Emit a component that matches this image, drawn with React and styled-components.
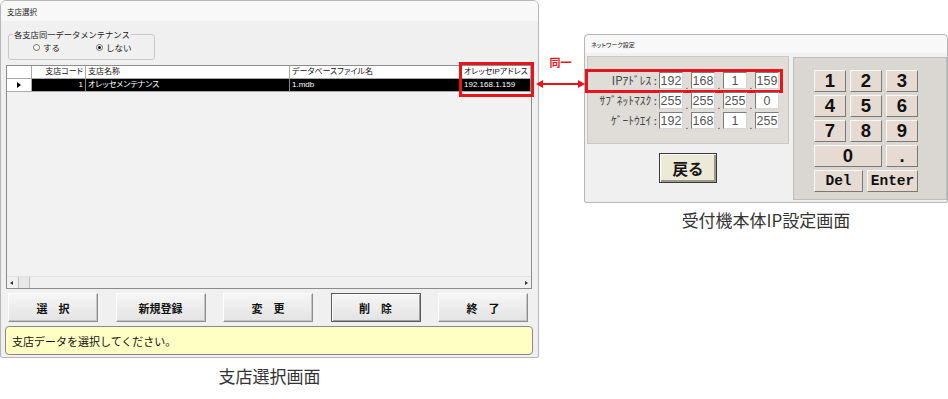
import React from "react";
import styled, { createGlobalStyle } from "styled-components";

const JP = `"Noto Sans CJK JP", "Noto Sans", sans-serif`;
const UI = `"Liberation Sans", "Noto Sans CJK JP", sans-serif`;
const RED = "#e8141c";

const GlobalStyle = createGlobalStyle`
  html, body { margin: 0; padding: 0; background: #fff; }
  body { font-family: ${JP}; color: #111; }
  * { box-sizing: border-box; }
`;

const Page = styled.div`
  position: relative;
  width: 948px;
  height: 399px;
  display: flex;
  align-items: flex-start;
  overflow: hidden;
  background: #fff;
`;

const Column = styled.div`
  display: flex;
  flex-direction: column;
  align-items: center;
  flex: none;
  width: ${(p) => p.$w}px;
  margin-left: ${(p) => p.$ml || 0}px;
  margin-top: ${(p) => p.$mt || 0}px;
`;

const Caption = styled.div`
  margin-top: ${(p) => p.$mt}px;
  font-family: ${JP};
  font-size: 17px;
  line-height: 20px;
  color: #333;
`;

const Window = styled.div`
  width: 100%;
  height: ${(p) => p.$h}px;
  border: 1px solid #b6b6b6;
  border-radius: ${(p) => p.$r}px ${(p) => p.$r}px 2px 2px;
  background: #f0f0f0;
  display: flex;
  flex-direction: column;
`;

const TitleBar = styled.div`
  height: ${(p) => p.$h}px;
  flex: none;
  display: flex;
  align-items: center;
  padding-left: ${(p) => p.$pl}px;
  font-family: ${JP};
  font-feature-settings: "palt";
  font-size: ${(p) => p.$fs}px;
  color: #222;
  background: #f8f8f8;
  border-radius: 5px 5px 0 0;
`;

const Body = styled.div`
  flex: 1;
  display: flex;
  flex-direction: column;
  padding: 0 6px 2px 5px;
`;

/* ---------- group box ---------- */
const GroupBox = styled.fieldset`
  margin: 8px 0 0 2px;
  padding: 0 0 7px 0;
  width: 147px;
  border: 1px solid #c9c9c9;
  border-radius: 3px;
  min-width: 0;
`;

const Legend = styled.legend`
  padding: 0 1px;
  margin-left: 4px;
  font-size: 8.3px;
  line-height: 10px;
  white-space: nowrap;
  color: #222;
`;

const RadioRow = styled.div`
  margin-top: 3px;
  padding-left: 24px;
  height: 10px;
  display: flex;
  align-items: center;
`;

const RadioItem = styled.label`
  width: ${(p) => p.$w}px;
  display: flex;
  align-items: center;
  gap: 3px;
  font-size: 8.5px;
  line-height: 10px;
  white-space: nowrap;
  color: #222;
`;

const RadioDot = styled.span`
  width: 7px;
  height: 7px;
  flex: none;
  border-radius: 50%;
  border: 1px solid #6f6f6f;
  background: #fff;
  display: flex;
  align-items: center;
  justify-content: center;
  &::after {
    content: "";
    width: 3px;
    height: 3px;
    border-radius: 50%;
    background: ${(p) => (p.$on ? "#111" : "transparent")};
  }
`;

/* ---------- grid ---------- */
const GridBox = styled.div`
  position: relative;
  margin-top: 5px;
  height: 224px;
  border: 1px solid #8c8c8c;
  background: #f0f0f0;
  display: flex;
  flex-direction: column;
`;

const GridRow = styled.div`
  display: grid;
  grid-template-columns: 25px 54px 204px 172px 1fr;
  height: 13px;
  flex: none;
`;

const Cell = styled.div`
  font-family: ${UI};
  font-feature-settings: "palt";
  font-size: 8px;
  line-height: 12px;
  padding: 0 2px;
  white-space: nowrap;
  overflow: hidden;
  text-align: ${(p) => p.$align || "left"};
  background: ${(p) => (p.$sel ? "#000" : "#fff")};
  color: ${(p) => (p.$sel ? "#fff" : "#111")};
  border-right: 1px solid ${(p) => (p.$sel ? "#8a8a8a" : "#a8a8a8")};
  border-bottom: 1px solid #a8a8a8;
`;

const RowHead = styled.div`
  background: #fff;
  border-right: 1px solid #a8a8a8;
  border-bottom: 1px solid #a8a8a8;
  display: flex;
  align-items: center;
  padding-left: 10px;
`;

const Pointer = styled.span`
  width: 0;
  height: 0;
  border-top: 3px solid transparent;
  border-bottom: 3px solid transparent;
  border-left: 4px solid #000;
`;

const GridSpace = styled.div`
  flex: 1;
  background: #f2f2f2;
`;

const HScroll = styled.div`
  height: 12px;
  flex: none;
  display: flex;
  align-items: center;
  padding: 0 3px 0 3px;
  background: #f0f0f0;
  border-top: 1px solid #e2e2e2;
`;

const ScrollArrow = styled.span`
  width: 0;
  height: 0;
  border-top: 2px solid transparent;
  border-bottom: 2px solid transparent;
  ${(p) =>
    p.$dir === "left"
      ? "border-right: 3px solid #333;"
      : "border-left: 3px solid #333;"}
`;

const Thumb = styled.span`
  width: 12px;
  height: 11px;
  margin-left: 5px;
  background: #e8e8e8;
  border-left: 1px solid #bdbdbd;
  border-right: 1px solid #bdbdbd;
`;

const Fill = styled.span`
  flex: 1;
`;

const Highlight = styled.div`
  position: absolute;
  left: ${(p) => p.$l}px;
  top: ${(p) => p.$t}px;
  width: ${(p) => p.$w}px;
  height: ${(p) => p.$h}px;
  border: 3px solid ${RED};
  pointer-events: none;
`;

/* ---------- buttons / status ---------- */
const ButtonRow = styled.div`
  margin-top: 4px;
  padding: 0 4px 0 2px;
  display: flex;
  justify-content: space-between;
`;

const Btn = styled.button`
  width: 90px;
  height: 29px;
  padding: 0;
  font-family: ${JP};
  font-weight: 700;
  font-size: 11px;
  color: #111;
  background: linear-gradient(#f6f6f6, #e3e3e3);
  border: 1px solid;
  border-color: ${(p) =>
    p.$focus ? "#5a5a5a" : "#fdfdfd #8d8d8d #8d8d8d #fdfdfd"};
  box-shadow: ${(p) =>
    p.$focus
      ? "inset 1px 1px 0 #fff, inset -1px -1px 0 #a0a0a0"
      : "inset -1px -1px 0 #c4c4c4"};
`;

const StatusBox = styled.div`
  margin: 4px -1px 0 -1px;
  height: 29px;
  border: 1px solid #8a8a8a;
  border-radius: 4px;
  background: #ffffc4;
  display: flex;
  align-items: center;
  padding-left: 6px;
  font-size: 11px;
  color: #111;
`;

/* ---------- connector ---------- */
const Connector = styled.div`
  position: absolute;
  left: 536px;
  top: 56px;
  width: 49px;
  display: flex;
  flex-direction: column;
  align-items: center;
`;

const Same = styled.div`
  font-family: ${JP};
  font-weight: 700;
  font-size: 11px;
  line-height: 13px;
  color: ${RED};
`;

const ArrowSvg = styled.svg`
  display: block;
  margin-top: 10px;
`;

/* ---------- right window ---------- */
const RBody = styled.div`
  flex: 1;
  display: flex;
  align-items: flex-start;
  gap: 4px;
  padding: 3px 0 2px 2px;
`;

const LeftPane = styled.div`
  width: 202px;
  display: flex;
  flex-direction: column;
  align-items: center;
`;

const IPPanel = styled.div`
  width: 202px;
  height: 88px;
  border: 1px solid #c6c6c6;
  background: #e0ddd9;
  padding-top: 15px;
  display: flex;
  flex-direction: column;
  gap: 3px;
`;

const FieldRow = styled.div`
  position: relative;
  height: 17px;
  display: flex;
  align-items: stretch;
`;

const FieldLabel = styled.div`
  width: 69px;
  margin-right: 2px;
  text-align: right;
  white-space: nowrap;
  font-family: ${JP};
  font-size: 11.5px;
  line-height: 17px;
  color: #444;
`;

const Field = styled.div`
  width: 24px;
  background: #fff;
  border: 1px solid;
  border-color: #7c7c7c #d6d6d6 #d6d6d6 #7c7c7c;
  display: flex;
  align-items: center;
  justify-content: center;
  font-family: ${UI};
  font-size: 12.5px;
  color: #555;
`;

const Dot = styled.span`
  width: 8px;
  display: flex;
  align-items: flex-end;
  justify-content: center;
  font-family: ${UI};
  font-size: 10px;
  line-height: 7px;
  color: #333;
`;

const BackBtn = styled.button`
  margin-top: 9px;
  width: 58px;
  height: 30px;
  padding: 0;
  font-family: ${JP};
  font-weight: 700;
  font-size: 15.5px;
  color: #151515;
  background: #ece9d6;
  border: 1px solid #3a3a3a;
  box-shadow: inset 1px 1px 0 #fff, inset -2px -2px 0 #9d998a;
`;

const Keypad = styled.div`
  width: 154px;
  height: 143px;
  margin-top: 1px;
  border: 1px solid #bdbdbd;
  background: #dad7d3;
  padding: 12px 0 0 20px;
  display: flex;
  flex-direction: column;
  gap: 3px;
`;

const KeyRow = styled.div`
  display: grid;
  grid-template-columns: repeat(3, 32px);
  gap: 4px;
`;

const BottomKeys = styled.div`
  display: flex;
  gap: 4px;
`;

const Key = styled.button`
  height: 22px;
  width: ${(p) => (p.$w ? `${p.$w}px` : "auto")};
  grid-column: span ${(p) => p.$span || 1};
  padding: 0;
  background: #e5dbd3;
  border: 1px solid;
  border-color: #fbf8f5 #7c7874 #7c7874 #fbf8f5;
  font-family: ${(p) => (p.$mono ? `"Liberation Mono", monospace` : UI)};
  font-weight: 700;
  font-size: ${(p) => (p.$mono ? 14.5 : 18.5)}px;
  line-height: 20px;
  color: #111;
`;

const digits = [
  ["1", "2", "3"],
  ["4", "5", "6"],
  ["7", "8", "9"],
];

const ipRows = [
  { label: "IPｱﾄﾞﾚｽ : ", vals: ["192", "168", "1", "159"], hl: true },
  { label: "ｻﾌﾞﾈｯﾄﾏｽｸ : ", vals: ["255", "255", "255", "0"] },
  { label: "ｹﾞｰﾄｳｴｲ : ", vals: ["192", "168", "1", "255"] },
];

export default function App() {
  return (
    <>
      <GlobalStyle />
      <Page>
        <Column $w={539}>
          <Window $h={358} $r={6}>
            <TitleBar $h={20} $pl={6} $fs={7.5}>
              支店選択
            </TitleBar>
            <Body>
              <GroupBox>
                <Legend>各支店同一データメンテナンス</Legend>
                <RadioRow>
                  <RadioItem $w={63}>
                    <RadioDot />
                    する
                  </RadioItem>
                  <RadioItem $w={50}>
                    <RadioDot $on />
                    しない
                  </RadioItem>
                </RadioRow>
              </GroupBox>

              <GridBox>
                <GridRow>
                  <Cell />
                  <Cell $align="right">支店コード</Cell>
                  <Cell>支店名称</Cell>
                  <Cell>データベースファイル名</Cell>
                  <Cell>オレッセIPアドレス</Cell>
                </GridRow>
                <GridRow>
                  <RowHead>
                    <Pointer />
                  </RowHead>
                  <Cell $sel $align="right">
                    1
                  </Cell>
                  <Cell $sel>オレッセメンテナンス</Cell>
                  <Cell $sel>1.mdb</Cell>
                  <Cell $sel>192.168.1.159</Cell>
                </GridRow>
                <GridSpace />
                <HScroll>
                  <ScrollArrow $dir="left" />
                  <Thumb />
                  <Fill />
                  <ScrollArrow $dir="right" />
                </HScroll>
                <Highlight $l={452} $t={-4} $w={75} $h={35} />
              </GridBox>

              <ButtonRow>
                <Btn>選　択</Btn>
                <Btn>新規登録</Btn>
                <Btn>変　更</Btn>
                <Btn $focus>削　除</Btn>
                <Btn>終　了</Btn>
              </ButtonRow>

              <StatusBox>支店データを選択してください。</StatusBox>
            </Body>
          </Window>
          <Caption $mt={8}>支店選択画面</Caption>
        </Column>

        <Column $w={364} $ml={45} $mt={34}>
          <Window $h={169} $r={4}>
            <TitleBar $h={18} $pl={6} $fs={6}>
              ネットワーク設定
            </TitleBar>
            <RBody>
              <LeftPane>
                <IPPanel>
                  {ipRows.map((r) => (
                    <FieldRow key={r.label}>
                      <FieldLabel>{r.label}</FieldLabel>
                      {r.vals.map((v, i) => (
                        <React.Fragment key={i}>
                          {i > 0 && <Dot>.</Dot>}
                          <Field>{v}</Field>
                        </React.Fragment>
                      ))}
                      {r.hl && <Highlight $l={-3} $t={-3} $w={198} $h={24} />}
                    </FieldRow>
                  ))}
                </IPPanel>
                <BackBtn>戻る</BackBtn>
              </LeftPane>

              <Keypad>
                {digits.map((row, i) => (
                  <KeyRow key={i}>
                    {row.map((d) => (
                      <Key key={d}>{d}</Key>
                    ))}
                  </KeyRow>
                ))}
                <KeyRow>
                  <Key $span={2}>0</Key>
                  <Key>.</Key>
                </KeyRow>
                <BottomKeys>
                  <Key $mono $w={49}>
                    Del
                  </Key>
                  <Key $mono $w={51}>
                    Enter
                  </Key>
                </BottomKeys>
              </Keypad>
            </RBody>
          </Window>
          <Caption $mt={7}>受付機本体IP設定画面</Caption>
        </Column>

        <Connector>
          <Same>同一</Same>
          <ArrowSvg width="49" height="10" viewBox="0 0 49 10">
            <line x1="5" y1="5" x2="44" y2="5" stroke={RED} strokeWidth="2" />
            <polygon points="0,5 7,1 7,9" fill={RED} />
            <polygon points="49,5 42,1 42,9" fill={RED} />
          </ArrowSvg>
        </Connector>
      </Page>
    </>
  );
}
